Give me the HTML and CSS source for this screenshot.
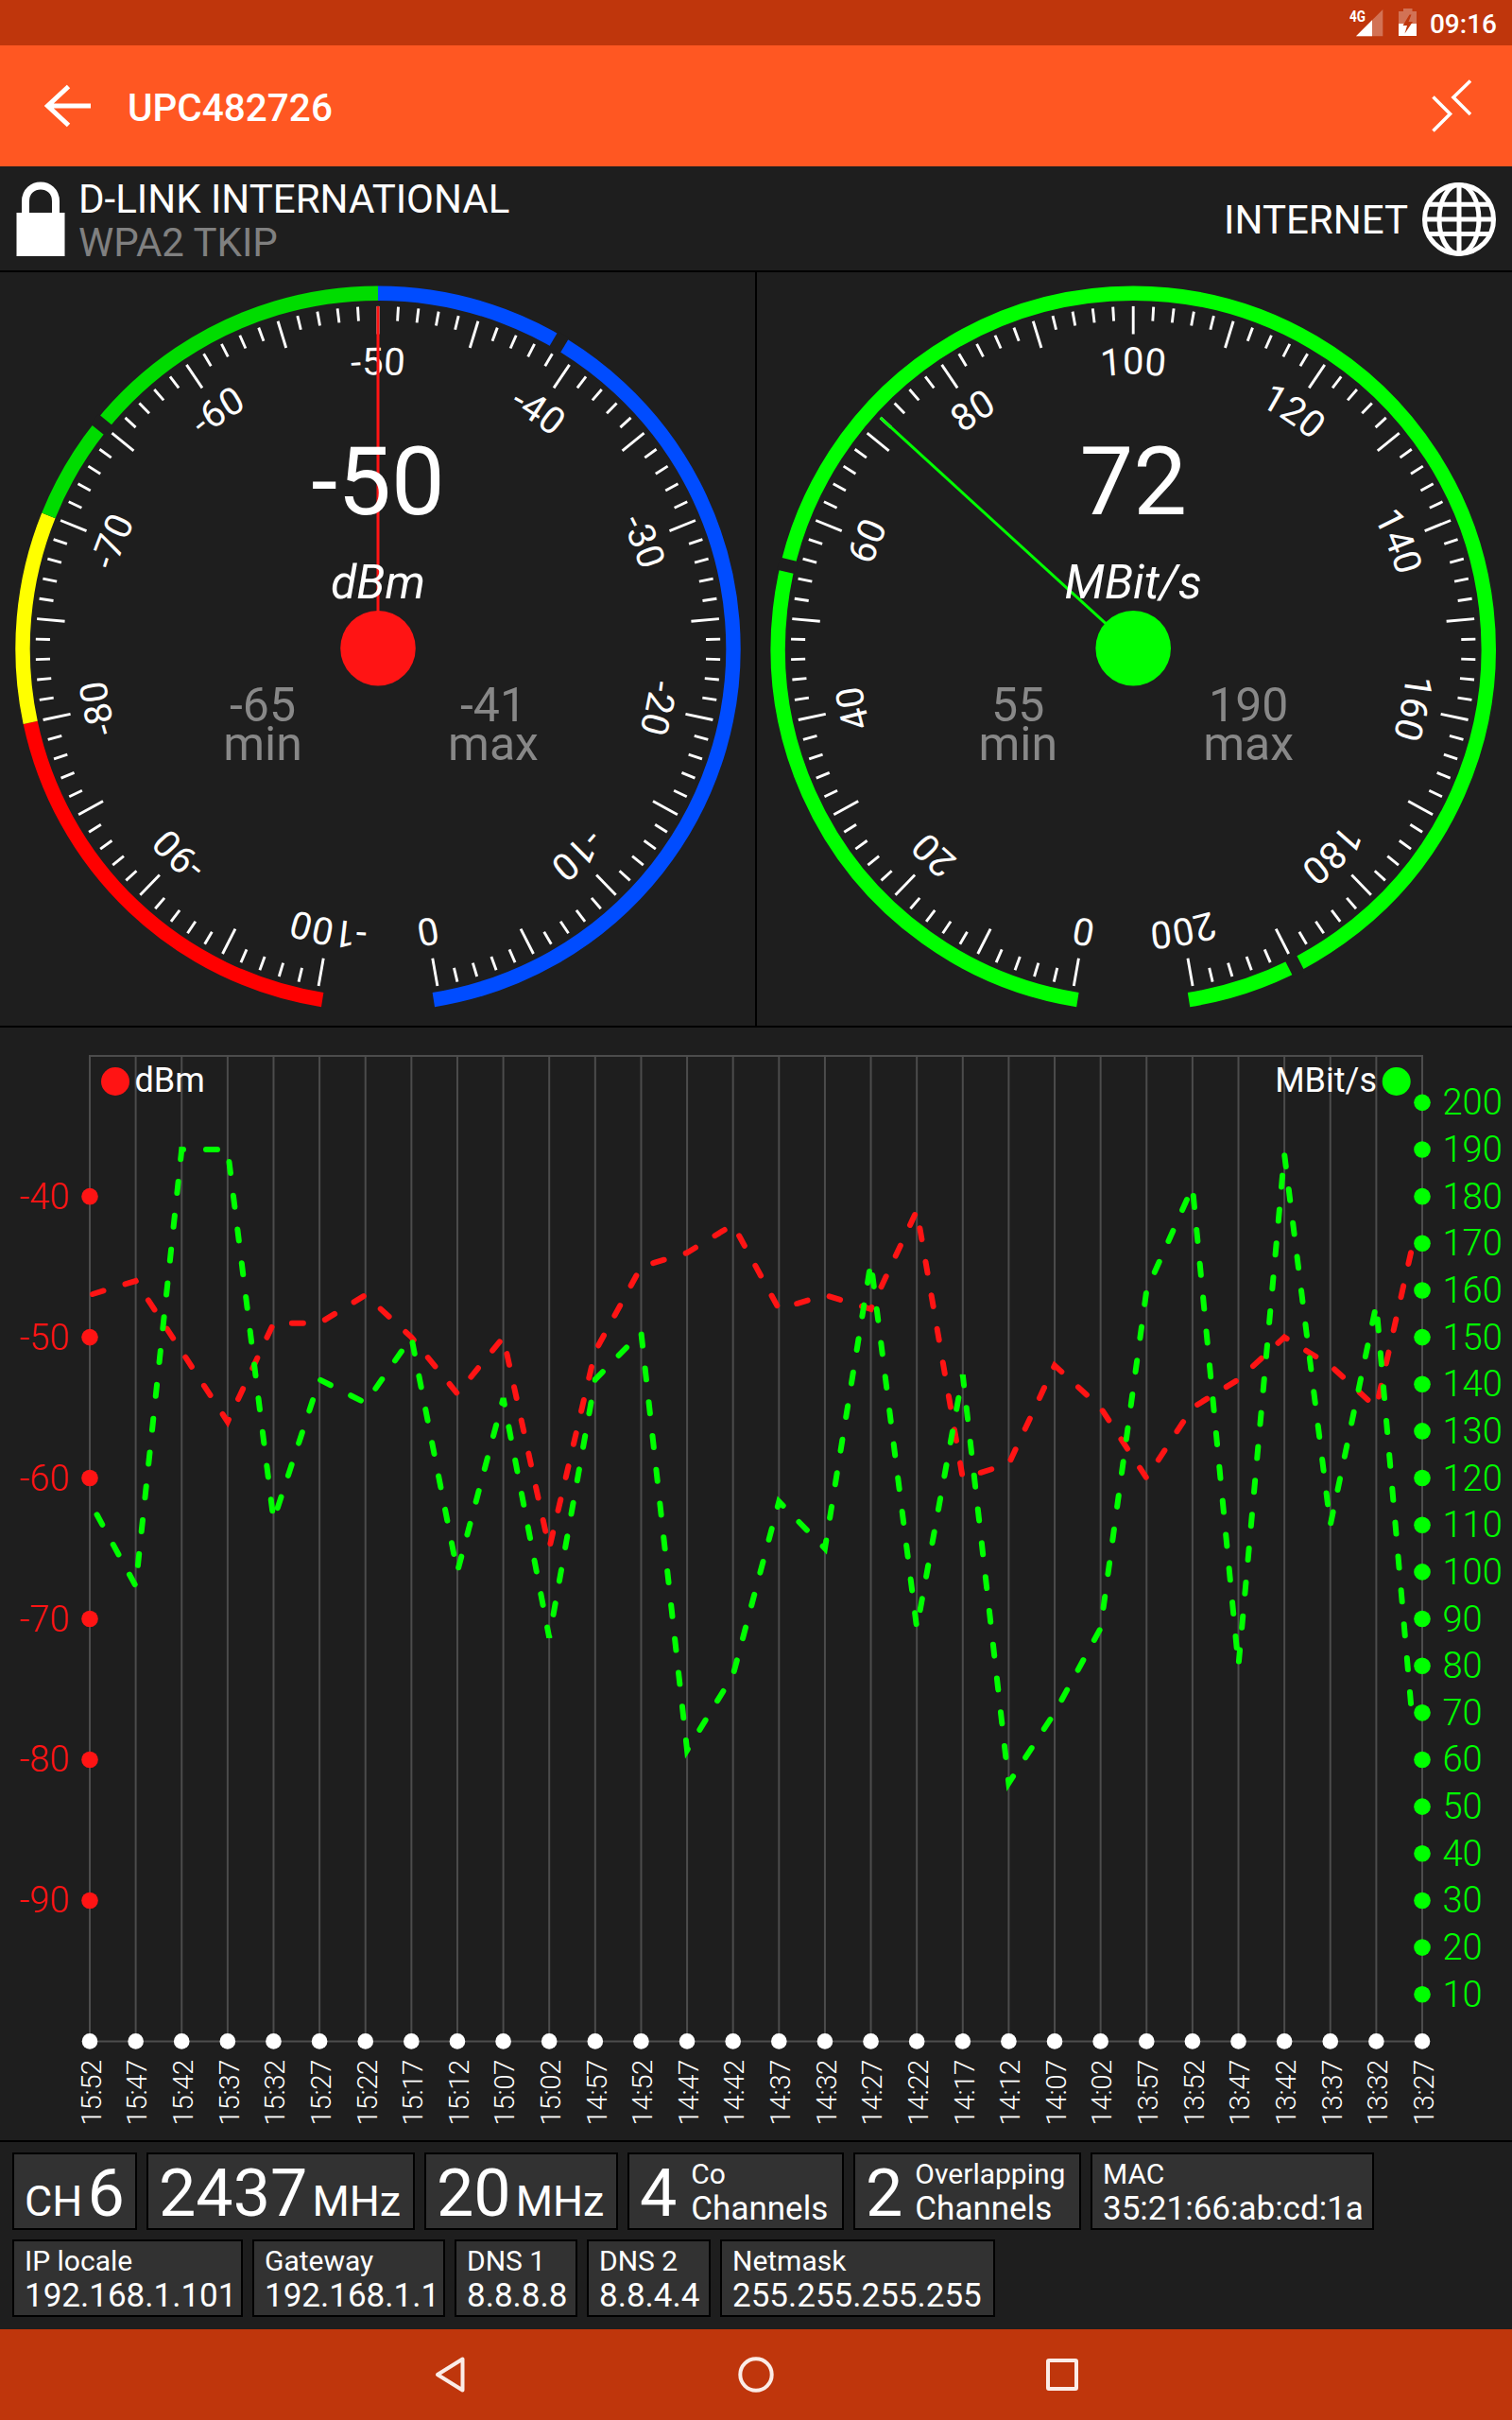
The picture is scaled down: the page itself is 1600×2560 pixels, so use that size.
FILE: index.html
```
<!DOCTYPE html>
<html lang="en">
<head>
    <meta charset="UTF-8">
    <meta name="viewport" content="width=device-width, initial-scale=1.0">
    <title>UPC482726</title>
    <link rel="stylesheet" href="styles.css">
</head>
<body>
    <div class="status-bar">
        <svg class="signal" width="37" height="48" viewBox="0 0 37 48">
            <text x="0" y="22.5" class="signal-text" textLength="17" lengthAdjust="spacingAndGlyphs">4G</text>
            <path d="M35.3 10V38.3H7Z" fill="#fff" fill-opacity="0.3"/>
            <path d="M24 21.3V38.3H7Z" fill="#fff"/>
        </svg>
        <svg class="battery" width="19" height="48" viewBox="0 0 19 48">
            <path d="M5 9H14.5V12H19V25H0V12H5Z" fill="#fff" fill-opacity="0.3"/>
            <path d="M0 25H19V38H0Z" fill="#fff"/>
            <path d="M11.5 15.5L4.5 27H9L6.5 35.5L15 23H10.5L13.5 15.5Z" fill="#bf360c"/>
        </svg>
        <span class="clock">09:16</span>
    </div>

    <div class="toolbar">
        <svg class="back" width="50" height="48" viewBox="0 0 50 48">
            <path d="M25.500 3.500L3.500 24L25.500 44.500M3.500 24H49" fill="none" stroke="#fff" stroke-width="5"/>
        </svg>
        <h1>UPC482726</h1>
        <svg class="collapse" width="42" height="56" viewBox="0 0 42 56">
            <path d="M1.500 18.500L19.500 36.500L1.500 54.500M41 1.500L23 19L41 37" fill="none" stroke="#fff" stroke-width="3.6"/>
        </svg>
    </div>

    <div class="network">
        <svg class="lock" width="52" height="80" viewBox="0 0 52 80">
            <path d="M10 36V21C10 -1 42 -1 42 21V36" fill="none" stroke="#fff" stroke-width="8"/>
            <rect x="0.500" y="33" width="51" height="46" fill="#fff"/>
        </svg>
        <div class="vendor">
            <div>D-LINK INTERNATIONAL</div>
            <div class="security">WPA2 TKIP</div>
        </div>
        <div class="internet">INTERNET</div>
        <svg class="globe" width="78" height="78" viewBox="0 0 78 78">
            <g fill="none" stroke="#fff" stroke-width="5">
                <circle cx="39" cy="39" r="36.500"/>
                <ellipse cx="39" cy="39" rx="21" ry="36.500"/>
                <path d="M39 2V76M2 39H76M7 23.300H71M7 54.500H71"/>
            </g>
        </svg>
    </div>

    <div class="gauges">
        <svg id="gauge-dbm" class="gauge" width="799" height="797"></svg>
        <svg id="gauge-mbit" class="gauge" width="799" height="797"></svg>
    </div>

    <svg id="chart" class="chart" width="1600" height="1177"></svg>

    <div class="info">
        <div class="row">
            <div class="tile big ch"><small>CH</small><b>6</b></div>
            <div class="tile big freq"><b>2437</b><small>MHz</small></div>
            <div class="tile big width"><b>20</b><small>MHz</small></div>
            <div class="tile count co"><b>4</b><div><p>Co</p><p class="val">Channels</p></div></div>
            <div class="tile count over"><b>2</b><div><p>Overlapping</p><p class="val">Channels</p></div></div>
            <div class="tile mac"><p>MAC</p><p class="val">35:21:66:ab:cd:1a</p></div>
        </div>
        <div class="row">
            <div class="tile ip"><p>IP locale</p><p class="val">192.168.1.101</p></div>
            <div class="tile gateway"><p>Gateway</p><p class="val">192.168.1.1</p></div>
            <div class="tile dns1"><p>DNS 1</p><p class="val">8.8.8.8</p></div>
            <div class="tile dns2"><p>DNS 2</p><p class="val">8.8.4.4</p></div>
            <div class="tile netmask"><p>Netmask</p><p class="val">255.255.255.255</p></div>
        </div>
    </div>

    <div class="nav-bar">
        <svg width="40" height="40" viewBox="0 0 40 40">
            <path d="M33.500 3.500V36.500L7 20Z"/>
        </svg>
        <svg width="40" height="40" viewBox="0 0 40 40">
            <circle cx="20" cy="20" r="16.700"/>
        </svg>
        <svg width="40" height="40" viewBox="0 0 40 40">
            <rect x="5" y="5" width="30" height="30" rx="1"/>
        </svg>
    </div>

    <script>
        // angle of a value, 0 = straight up, the scale spans 340 degrees
        function angleOf(value, min, max) {
            return -170 + (value - min) / (max - min) * 340;
        }

        function point(cx, cy, r, angle) {
            const a = angle * Math.PI / 180;
            return (cx + r * Math.sin(a)).toFixed(2) + ' ' + (cy - r * Math.cos(a)).toFixed(2);
        }

        function arc(g, from, to, color) {
            const large = to - from > 180 ? 1 : 0;
            return `<path d="M${point(g.cx, g.cy, 376, from)}A376 376 0 ${large} 1 ${point(g.cx, g.cy, 376, to)}" fill="none" stroke="${color}" stroke-width="15.4"/>`;
        }

        function drawGauge(id, g) {
            let out = `<defs><path id="${id}-path" d="M0 290A290 290 0 0 1 0 -290A290 290 0 0 1 0 290"/></defs>`;

            for (const b of g.bands) {
                // the ring runs one degree past both ends of the scale
                const from = angleOf(b[0], g.min, g.max) - (b[0] === g.min ? 1 : 0);
                const to = angleOf(b[1], g.min, g.max) + (b[1] === g.max ? 1 : 0);
                out += arc(g, from, to, b[2]);
            }
            // notches for the lowest and highest value
            for (const v of [g.low, g.high]) {
                const a = angleOf(v, g.min, g.max);
                out += `<path d="M${point(g.cx, g.cy, 366, a)}L${point(g.cx, g.cy, 386, a)}" stroke="#1e1e1e" stroke-width="13.5"/>`;
            }
            for (let i = 0; i <= 100; i++) {
                const a = -170 + i * 3.4;
                const inner = i % 5 === 0 ? 332.7 : 347.2;
                out += `<path d="M${point(g.cx, g.cy, inner, a)}L${point(g.cx, g.cy, 362.3, a)}" stroke="#fff" stroke-width="2.9"/>`;
            }
            for (let i = 0; i <= 10; i++) {
                const a = -170 + i * 34;
                const label = g.min + i * (g.max - g.min) / 10;
                out += `<g transform="translate(${g.cx} ${g.cy}) rotate(${a})"><text class="scale"><textPath href="#${id}-path" startOffset="50%">${label}</textPath></text></g>`;
            }

            const a = angleOf(g.value, g.min, g.max);
            out += `<path d="M${g.cx} ${g.cy}L${point(g.cx, g.cy, 362.3, a)}" stroke="${g.color}" stroke-width="3"/>`;
            out += `<circle cx="${g.cx}" cy="${g.cy - 0.5}" r="39.8" fill="${g.color}"/>`;
            out += `<text class="value" x="${g.cx}" y="256">${g.value}</text>`;
            out += `<text class="unit" x="${g.cx}" y="344.8">${g.unit}</text>`;
            out += `<text class="minmax" x="${g.cx - 122}" y="474.7">${g.low}</text>`;
            out += `<text class="minmax" x="${g.cx - 122}" y="516.3">min</text>`;
            out += `<text class="minmax" x="${g.cx + 122}" y="474.7">${g.high}</text>`;
            out += `<text class="minmax" x="${g.cx + 122}" y="516.3">max</text>`;
            document.getElementById(id).innerHTML = out;
        }

        drawGauge('gauge-dbm', {
            cx: 400, cy: 398.2, min: -100, max: 0, value: -50, low: -65, high: -41,
            unit: 'dBm', color: '#ff1414',
            bands: [[-100, -80, '#ff0000'], [-80, -70, '#ffff00'], [-70, -50, '#00dc00'], [-50, 0, '#004cff']]
        });
        drawGauge('gauge-mbit', {
            cx: 398.2, cy: 398.2, min: 0, max: 200, value: 72, low: 55, high: 190,
            unit: 'MBit/s', color: '#00ff00',
            bands: [[0, 200, '#00ff00']]
        });

        // signal and link speed history, one sample every 5 minutes
        const dbm = [-47, -46, -51, -56, -49, -49, -47, -50, -54, -50, -65, -51, -45, -44, -42,
            -48, -47, -48, -41, -60, -59, -52, -55, -60, -55, -53, -50, -52, -55, -44];
        const mbit = [115, 97, 190, 190, 111, 141, 136, 150, 100, 137, 86, 141, 151, 62, 78,
            115, 105, 166, 88, 142, 55, 70, 88, 160, 182, 80, 189, 110, 157, 72];

        const left = 95, right = 1505, top1 = 29.7, bottom = 1072.4;
        const step = (right - left) / 29;

        function yDbm(v) {
            return bottom - (v + 100) * (bottom - top1) / 70;
        }

        function yMbit(v) {
            return bottom - v * (bottom - top1) / 210;
        }

        function line(data, toY, color) {
            // the newest sample stops short of the right axis
            const pts = data.map((v, i) => (i === 29 ? 1493 : left + i * step).toFixed(2) + ',' + toY(v).toFixed(2));
            return `<polyline class="series" stroke="${color}" points="${pts.reverse().join(' ')}"/>`;
        }

        function drawChart() {
            let out = '';
            for (let i = 0; i < 30; i++) {
                const x = left + i * step;
                out += `<path class="grid" d="M${x} ${top1}V${bottom}"/>`;
            }
            out += `<path class="grid" d="M${left - 1} 30H${right + 1}M${left} ${bottom}H${right}"/>`;

            out += line(dbm, yDbm, '#ff1414');
            out += line(mbit, yMbit, '#00ff00');

            for (let v = -90; v <= -40; v += 10) {
                const y = yDbm(v);
                out += `<circle cx="${left}" cy="${y}" r="8.8" fill="#ff1414"/><text class="axis dbm" x="73.5" y="${y + 13}">${v}</text>`;
            }
            for (let v = 10; v <= 200; v += 10) {
                const y = yMbit(v);
                out += `<circle cx="${right}" cy="${y}" r="8.8" fill="#00ff00"/><text class="axis mbit" x="1526.5" y="${y + 13}">${v}</text>`;
            }
            for (let i = 0; i < 30; i++) {
                const x = left + i * step;
                const t = 15 * 60 + 52 - i * 5;
                const label = Math.floor(t / 60) + ':' + String(t % 60).padStart(2, '0');
                out += `<circle cx="${x}" cy="${bottom}" r="8.3" fill="#fff"/>`;
                out += `<text class="time" textLength="70" transform="translate(${x + 11.8} 1091.5) rotate(-90)">${label}</text>`;
            }

            out += '<circle cx="122" cy="57" r="15" fill="#ff1414"/><text class="legend" x="142.5" y="68.4">dBm</text>';
            out += '<circle cx="1477.7" cy="57" r="15" fill="#00ff00"/><text class="legend end" x="1457" y="68.4">MBit/s</text>';
            document.getElementById('chart').innerHTML = out;
        }

        drawChart();
    </script>
</body>
</html>
```

FILE: styles.css
```
* {
    box-sizing: border-box;
}
body {
    font-family: Roboto, sans-serif;
    margin: 0;
    width: 1600px;
    height: 2560px;
    overflow: hidden;
    background: #1e1e1e;
    color: #fff;
    display: flex;
    flex-direction: column;
}
svg {
    display: block;
    flex: none;
}
p {
    margin: 0;
}

.status-bar {
    height: 48px;
    background: #bf360c;
    display: flex;
    justify-content: flex-end;
    align-items: center;
    padding-right: 16px;
}
.signal-text {
    font-size: 16px;
    font-weight: 700;
    fill: #fff;
}
.battery {
    margin-left: 15px;
}
.clock {
    font-size: 28px;
    font-weight: 500;
    line-height: 48px;
    margin-left: 14px;
    padding-top: 3px;
}

.toolbar {
    height: 128px;
    background: #ff5722;
    display: flex;
    align-items: center;
    padding: 0 43px 0 47px;
}
.toolbar h1 {
    font-size: 40.5px;
    font-weight: 500;
    line-height: 48px;
    margin: 3px auto 0 38px;
}

.network {
    height: 112px;
    border-bottom: 2px solid #000;
    display: flex;
    align-items: center;
    padding: 2px 17px 0 17px;
}
.vendor {
    font-size: 42px;
    line-height: 46px;
    margin: 3px auto 0 14px;
}
.security {
    color: #808080;
}
.internet {
    font-size: 42px;
}
.globe {
    margin-left: 15px;
}

.gauges {
    height: 799px;
    border-bottom: 2px solid #000;
    display: flex;
}
.gauge + .gauge {
    border-left: 2px solid #000;
    width: 801px;
}
.gauge text {
    text-anchor: middle;
    fill: #fff;
}
.gauge .scale {
    font-size: 40px;
}
.gauge .value {
    font-size: 101px;
}
.gauge .unit {
    font-size: 50px;
    font-style: italic;
}
.gauge .minmax {
    font-size: 50px;
    fill: #888;
}

.grid {
    stroke: #4c4c4c;
    stroke-width: 2;
    fill: none;
}
.series {
    fill: none;
    stroke-width: 6;
    stroke-linecap: round;
    stroke-dasharray: 12 24;
}
.axis {
    font-size: 38px;
    font-weight: 300;
}
.axis.dbm {
    fill: #ff1414;
    text-anchor: end;
}
.axis.mbit {
    fill: #00ff00;
}
.time {
    font-size: 29.5px;
    font-weight: 300;
    fill: #fff;
    text-anchor: end;
}
.legend {
    font-size: 36px;
    fill: #fff;
}
.legend.end {
    text-anchor: end;
}

.info {
    height: 200px;
    border-top: 2px solid #000;
    padding: 11px 13px 0;
    display: flex;
    flex-direction: column;
    gap: 10px;
}
.row {
    display: flex;
    gap: 10px;
}
.tile {
    height: 82px;
    border: 2px solid #000;
    background: #323232;
    padding: 3px 0 0 11px;
    font-size: 30px;
    line-height: 36px;
    white-space: nowrap;
}
.tile .val {
    font-size: 35px;
    line-height: 38px;
}
.tile b {
    font-size: 70px;
    font-weight: 400;
    line-height: 76px;
}
.big {
    display: flex;
    align-items: baseline;
    gap: 5px;
    padding-top: 3px;
}
.big small {
    font-size: 45px;
}
.count {
    display: flex;
    gap: 15px;
}
.ch { width: 132px; }
.freq { width: 284px; }
.width { width: 205px; }
.co { width: 229px; }
.over {
    width: 241px;
    gap: 13px;
}
.mac { width: 300px; }
.ip { width: 244px; }
.gateway { width: 204px; }
.dns1 { width: 130px; }
.dns2 { width: 131px; }
.netmask { width: 291px; }

.nav-bar {
    height: 96px;
    background: #bf360c;
    display: flex;
    justify-content: center;
    align-items: center;
    gap: 284px;
}
.nav-bar svg {
    fill: none;
    stroke: #fbece7;
    stroke-width: 4;
    stroke-linejoin: round;
}
```
